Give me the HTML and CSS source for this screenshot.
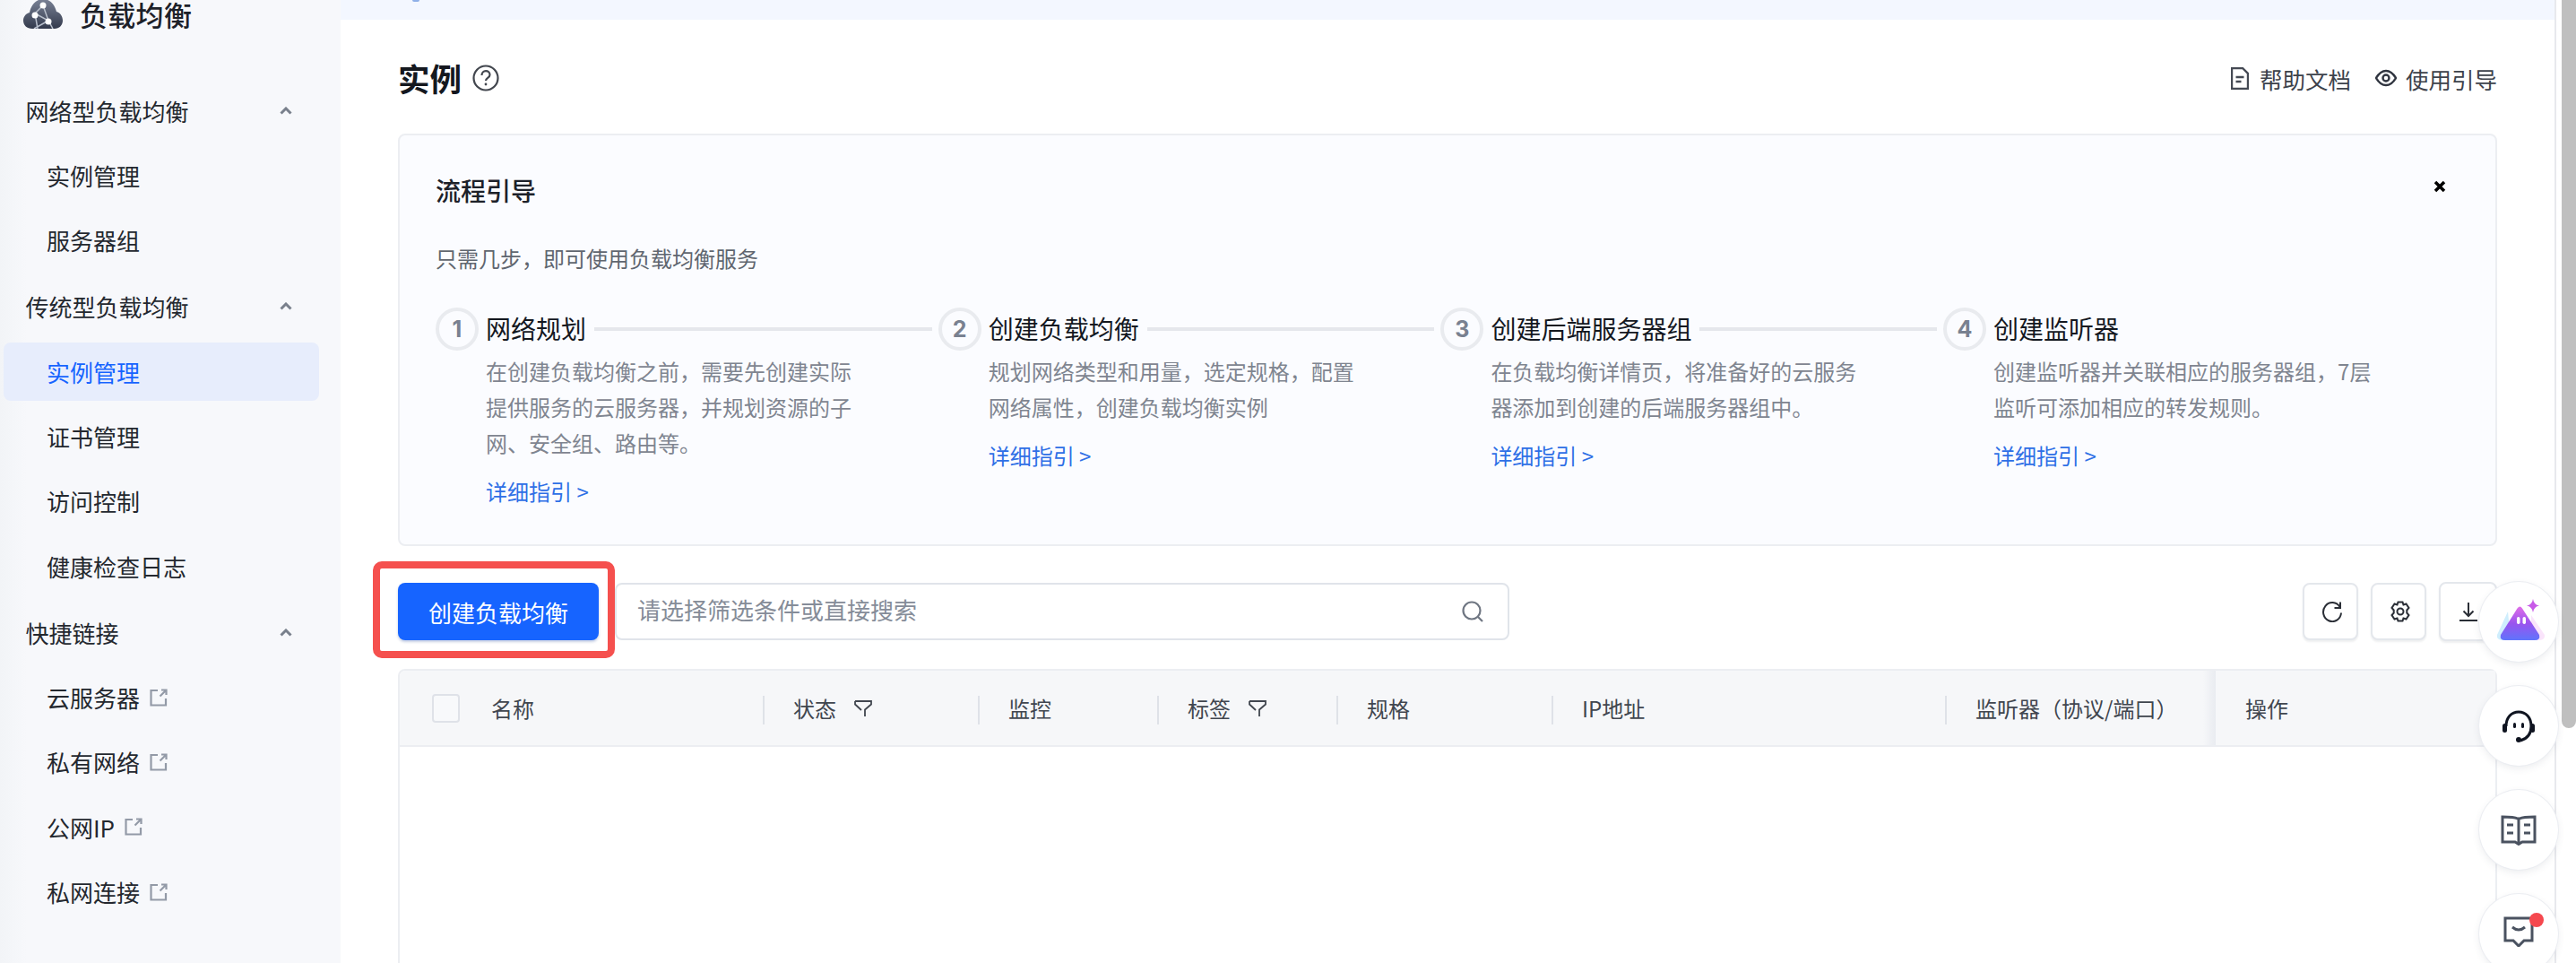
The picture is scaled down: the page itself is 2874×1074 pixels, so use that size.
FILE: index.html
```html
<!DOCTYPE html>
<html lang="zh-CN">
<head>
<meta charset="utf-8">
<title>负载均衡</title>
<link rel="stylesheet" href="styles.css">
</head>
<body>
<div class="app">
  <aside class="side">
    <div class="brand">
      <svg class="brand-logo" viewBox="0 0 44 32">
        <defs><linearGradient id="cl" x1="0" y1="0" x2="0" y2="1"><stop offset="0" stop-color="#7a8296"/><stop offset="1" stop-color="#333a4c"/></linearGradient></defs>
        <path d="M10 32C4 32 0 28 0 23c0-4.500 3-8 7-9C8.500 6 14-1 22-1s13 6 15 14c4 1 7 5 7 10 0 5-4 9-9 9z" fill="url(#cl)"/>
        <path d="M22 6l-9 9 15 8 5 9M13 15l3 17M22 6l6 17M28 23l-16 9" stroke="#b9c0cc" stroke-width="1.500" fill="none"/>
        <circle cx="22" cy="6" r="3.500" fill="#fff"/><circle cx="13" cy="17" r="3.500" fill="#fff"/><circle cx="28" cy="24" r="3.500" fill="#fff"/>
      </svg>
      <span class="brand-name">负载均衡</span>
    </div>
    <nav class="nav">
      <div class="nav-head"><span>网络型负载均衡</span><svg class="chev" viewBox="0 0 14 9"><path d="M1.500 7.500L7 2l5.500 5.500" /></svg></div>
      <a class="nav-item">实例管理</a>
      <a class="nav-item">服务器组</a>
      <div class="nav-head group"><span>传统型负载均衡</span><svg class="chev" viewBox="0 0 14 9"><path d="M1.500 7.500L7 2l5.500 5.500" /></svg></div>
      <a class="nav-item active">实例管理</a>
      <a class="nav-item">证书管理</a>
      <a class="nav-item">访问控制</a>
      <a class="nav-item">健康检查日志</a>
      <div class="nav-head group"><span>快捷链接</span><svg class="chev" viewBox="0 0 14 9"><path d="M1.500 7.500L7 2l5.500 5.500" /></svg></div>
      <a class="nav-item">云服务器<svg class="ext" viewBox="0 0 20 20"><path d="M9 2H1.500v16.500H18V11M11.500 8.500L18.500 1.500M13 1.500h5.500V7"/></svg></a>
      <a class="nav-item">私有网络<svg class="ext" viewBox="0 0 20 20"><path d="M9 2H1.500v16.500H18V11M11.500 8.500L18.500 1.500M13 1.500h5.500V7"/></svg></a>
      <a class="nav-item">公网IP<svg class="ext" viewBox="0 0 20 20"><path d="M9 2H1.500v16.500H18V11M11.500 8.500L18.500 1.500M13 1.500h5.500V7"/></svg></a>
      <a class="nav-item">私网连接<svg class="ext" viewBox="0 0 20 20"><path d="M9 2H1.500v16.500H18V11M11.500 8.500L18.500 1.500M13 1.500h5.500V7"/></svg></a>
    </nav>
  </aside>

  <main class="main">
    <div class="banner"><i class="banner-dot"></i></div>
    <div class="content">
      <header class="page-head">
        <h1 class="page-title">实例</h1>
        <svg class="help" viewBox="0 0 30 30"><circle cx="15" cy="15" r="13.500"/><path d="M10.500 12c0-3 2-4.800 4.500-4.800s4.500 1.700 4.500 4.200c0 3.300-4.500 3.600-4.500 6.600"/><circle class="help-dot" cx="15" cy="22" r="1.400"/></svg>
        <div class="head-links">
          <a class="head-link"><svg class="doc" viewBox="0 0 20 25"><path d="M1 1h12l6 6v17H1zM5.500 11h9M5.500 16h6"/></svg>帮助文档</a>
          <a class="head-link"><svg class="eye" viewBox="0 0 24 20"><path d="M1 10c3-5 7-8 11-8s8 3 11 8c-3 5-7 8-11 8S4 15 1 10z"/><circle cx="12" cy="10" r="3.500"/></svg>使用引导</a>
        </div>
      </header>

      <section class="guide">
        <div class="guide-top">
          <h2 class="guide-title">流程引导</h2>
          <svg class="close" viewBox="0 0 14 14"><path d="M2 2l10 10M12 2L2 12"/></svg>
        </div>
        <p class="guide-sub">只需几步，即可使用负载均衡服务</p>
        <ol class="steps">
          <li class="step">
            <span class="step-no">1</span>
            <div class="step-body">
              <div class="step-head"><span class="step-title">网络规划</span><i class="step-line"></i></div>
              <p class="step-desc">在创建负载均衡之前，需要先创建实际<br>提供服务的云服务器，并规划资源的子<br>网、安全组、路由等。</p>
              <a class="step-link">详细指引 &gt;</a>
            </div>
          </li>
          <li class="step">
            <span class="step-no">2</span>
            <div class="step-body">
              <div class="step-head"><span class="step-title">创建负载均衡</span><i class="step-line"></i></div>
              <p class="step-desc">规划网络类型和用量，选定规格，配置<br>网络属性，创建负载均衡实例</p>
              <a class="step-link">详细指引 &gt;</a>
            </div>
          </li>
          <li class="step">
            <span class="step-no">3</span>
            <div class="step-body">
              <div class="step-head"><span class="step-title">创建后端服务器组</span><i class="step-line"></i></div>
              <p class="step-desc">在负载均衡详情页，将准备好的云服务<br>器添加到创建的后端服务器组中。</p>
              <a class="step-link">详细指引 &gt;</a>
            </div>
          </li>
          <li class="step">
            <span class="step-no">4</span>
            <div class="step-body">
              <div class="step-head"><span class="step-title">创建监听器</span></div>
              <p class="step-desc">创建监听器并关联相应的服务器组，7层<br>监听可添加相应的转发规则。</p>
              <a class="step-link">详细指引 &gt;</a>
            </div>
          </li>
        </ol>
      </section>

      <div class="toolbar">
        <button class="btn-primary">创建负载均衡</button>
        <div class="search">
          <span class="placeholder">请选择筛选条件或直接搜索</span>
          <svg class="search-icon" viewBox="0 0 24 24"><circle cx="11" cy="11" r="9.500"/><path d="M18 18l5 5"/></svg>
        </div>
        <div class="tools">
          <button class="tool"><svg viewBox="0 0 24 24"><path d="M20.500 7A10 10.500 0 1 0 22 13.500"/><path d="M21 1.500V8h-6.500"/></svg></button>
          <button class="tool"><svg viewBox="0 0 24 24"><path d="M9.500 1.500h5l1 3 3-1 3 4.500-2.200 2.500v3l2.200 2.500-3 4.500-3-1-1 3h-5l-1-3-3 1-3-4.500 2.200-2.500v-3L2.500 8l3-4.500 3 1z"/><circle cx="12" cy="12" r="3.500"/></svg></button>
          <button class="tool tool-last"><svg viewBox="0 0 24 24"><path d="M12 2v15M6.500 11.500L12 17l5.500-5.500M2 22h20"/></svg></button>
        </div>
      </div>

      <section class="table">
        <div class="thead">
          <div class="th th-name"><i class="check"></i>名称</div>
          <div class="th sep">状态<svg class="filter" viewBox="0 0 20 20"><path d="M1 2h18v3.500l-7 6V19M1 2v3.500l7 6.500"/></svg></div>
          <div class="th sep">监控</div>
          <div class="th sep">标签<svg class="filter" viewBox="0 0 20 20"><path d="M1 2h18v3.500l-7 6V19M1 2v3.500l7 6.500"/></svg></div>
          <div class="th sep">规格</div>
          <div class="th sep">IP地址</div>
          <div class="th sep">监听器（协议/端口）</div>
          <div class="th th-sticky">操作</div>
        </div>
      </section>
    </div>
  </main>

  <div class="scrollbar"><div class="thumb"></div></div>
</div>

<div class="float-dock">
  <button class="fab"><svg class="fab-ai" viewBox="0 0 54 46">
    <defs><linearGradient id="ai" x1="0" y1="0" x2="0" y2="1"><stop offset="0" stop-color="#e06ee8"/><stop offset=".5" stop-color="#9a54ee"/><stop offset="1" stop-color="#5f74fc"/></linearGradient></defs>
    <path d="M12 14L0 40q-1 5 5 6h10z" fill="#cfeefd"/><path d="M38 18l15 22q1 5-5 6H38z" fill="#fae4fb"/>
    <path d="M22.500 10.500q3-4 5.500 0L47 40q1.500 6-5 6H9q-6.500 0-5-6z" fill="url(#ai)"/>
    <rect x="22" y="20" width="3.500" height="8" rx="1.700" fill="#fff"/><rect x="28.500" y="20" width="3.500" height="8" rx="1.700" fill="#fff"/>
    <path d="M40 0q1 6.500 7 7.500-6 1-7 7.500-1-6.500-7-7.500 6-1 7-7.500z" fill="#c85ae8"/>
  </svg></button>
  <button class="fab"><svg class="fab-head" viewBox="0 0 36 36">
    <path d="M4 18C4 8 10 2 18 2s14 6 14 16c0 9-5 14-12 16" fill="none" stroke="#0f1420" stroke-width="3"/>
    <rect x="0" y="15" width="5" height="10" rx="2.500" fill="#0f1420"/><rect x="31" y="15" width="5" height="10" rx="2.500" fill="#0f1420"/>
    <circle cx="18" cy="33" r="3" fill="#0f1420"/>
    <rect x="12" y="14" width="3" height="6" rx="1.500" fill="#0f1420"/><rect x="21" y="14" width="3" height="6" rx="1.500" fill="#0f1420"/>
  </svg></button>
  <button class="fab"><svg class="fab-book" viewBox="0 0 40 34">
    <path d="M19 4C15 2 8 2 2 2v28h14l4 2.500 4-2.500h14V2c-6 0-13 0-17 2zM20 4v28" fill="none" stroke="#4a5260" stroke-width="3"/>
    <path d="M7 11h7M7 20h7M26 11h7M26 20h7" stroke="#4a5260" stroke-width="3"/>
  </svg></button>
  <button class="fab fab-msg"><svg class="fab-chat" viewBox="0 0 34 34">
    <path d="M2 2h30v25h-9l-6 6-6-6H2z" fill="none" stroke="#4a5260" stroke-width="3"/>
    <path d="M10 12q7 6 14 0" fill="none" stroke="#4a5260" stroke-width="3"/>
  </svg><i class="badge"></i></button>
</div>
</body>
</html>
```

FILE: styles.css
```css
* { box-sizing: border-box; }
html, body { margin: 0; height: 100%; overflow: hidden; }
body {
  font-family: "Noto Sans CJK SC", "Inter", "Noto Sans", sans-serif;
  color: #1d2129;
  background: #fff;
}
h1, h2, p, ol { margin: 0; padding: 0; }
ol { list-style: none; }
i { display: block; }
button { font: inherit; border: 0; padding: 0; background: none; }

.app { display: flex; height: 1074px; }

/* sidebar */
.side {
  width: 380px;
  flex: none;
  background: linear-gradient(90deg, #f2f4f7 0, #f7f8fb 30px);
}
.brand { display: flex; height: 32px; padding-left: 26px; }
.brand-logo { width: 44px; height: 32px; flex: none; }
.brand-name { margin-left: 19px; font-size: 31px; line-height: 31px; height: 31px; font-weight: 500; color: #1d2129; letter-spacing: .3px; }
.nav { display: flex; flex-direction: column; padding: 58.500px 24px 0 4px; }
.nav-head, .nav-item {
  display: flex;
  align-items: center;
  flex: none;
  height: 65px;
  margin-bottom: 7.300px;
  font-size: 26px;
  color: #24282f;
  width: 352px;
  border-radius: 8px;
}
.nav-head { padding-left: 24.500px; justify-content: flex-start; }
.nav-head span { flex: 1; }
.nav-head.group { margin-top: 2px; }
.nav-item { padding-left: 48px; }
.nav-item.active { background: #e7edfc; color: #1664ff; }
.chev { width: 14px; height: 9px; margin-right: 30px; fill: none; stroke: #79808c; stroke-width: 3; }
.ext { width: 20px; height: 20px; margin-left: 11px; fill: none; stroke: #939aa7; stroke-width: 2.200; }

/* main */
.main { width: 2470px; flex: none; display: flex; flex-direction: column; }
.banner { height: 22px; background: #f3f7ff; flex: none; padding-left: 80px; }
.banner-dot { width: 8px; height: 2px; border-radius: 0 0 4px 4px; background: #8fb0e8; }
.content { flex: 1; min-height: 0; padding: 0 64px; display: flex; flex-direction: column; }

.page-head { display: flex; align-items: center; height: 127px; padding-top: 3px; flex: none; }
.page-title { font-size: 35.500px; line-height: 44px; font-weight: 700; color: #14181f; }
.help { width: 30px; height: 30px; margin-left: 12px; fill: none; stroke: #42464e; stroke-width: 2.200; }
.help-dot { fill: #42464e; stroke: none; }
.head-links { margin-left: auto; display: flex; align-items: center; gap: 27px; }
.head-link { display: flex; align-items: center; font-size: 25.500px; color: #3d424b; }
.doc { width: 20px; height: 25px; margin-right: 12px; fill: none; stroke: #454a54; stroke-width: 2.400; }
.eye { width: 24px; height: 20px; margin-right: 10px; fill: none; stroke: #303540; stroke-width: 2.400; }

/* guide panel */
.guide {
  height: 460px;
  flex: none;
  border: 2px solid #eceef2;
  border-radius: 8px;
  background: #fbfcff;
  padding: 0 40px;
}
.guide-top { display: flex; align-items: center; justify-content: space-between; height: 120px; padding-top: 1px; }
.guide-title { font-size: 28px; font-weight: 500; color: #1d2129; }
.close { width: 14px; height: 14px; margin: -7px 15px 0 0; fill: none; stroke: #000; stroke-width: 3.500; }
.guide-sub { font-size: 24px; line-height: 34px; color: #60666f; margin-bottom: 38px; }

.steps { display: grid; grid-template-columns: repeat(4, 560.700px); }
.step { display: flex; }
.step-no {
  width: 48px; height: 48px; flex: none;
  border: 4px solid #e9ebef; border-radius: 50%;
  display: flex; align-items: center; justify-content: center;
  font-size: 25px; font-weight: 700; color: #798190;
  font-family: "Inter", sans-serif;
}
.step-body { flex: 1; min-width: 0; margin-left: 8px; }
.step-head { display: flex; align-items: center; height: 48px; margin-top: -1px; }
.step-title { font-size: 28px; color: #14181f; white-space: nowrap; }
.step-line { flex: 1; height: 4px; background: #e5e7ec; margin: 2px 7px 0 9px; }
.step-desc { font-size: 24px; line-height: 40px; color: #7f8590; margin-top: 4px; }
.step-link { display: block; margin-top: 14px; font-size: 24px; line-height: 40px; color: #2e6fe6; }

/* toolbar */
.toolbar { display: flex; align-items: center; height: 64px; margin-top: 41px; flex: none; }
.btn-primary {
  position: relative;
  width: 224px; height: 64px; flex: none;
  background: #1664ff; color: #fff; border-radius: 8px;
  font-size: 26px;
  box-shadow: 0 2px 3px rgba(22, 60, 140, .25);
}
.btn-primary::after {
  content: "";
  position: absolute;
  left: -28px; right: -18px; top: -24px; bottom: -20px;
  border: 8px solid #f5504e;
  border-radius: 10px;
}
.search {
  width: 998px; height: 64px; margin-left: 18px;
  border: 2px solid #e0e4ea; border-radius: 8px;
  display: flex; align-items: center; justify-content: space-between;
  padding: 0 27px 0 23px; background: #fff;
}
.placeholder { font-size: 26px; line-height: 36px; margin-top: -4px; color: #858c98; }
.search-icon { width: 24px; height: 24px; fill: none; stroke: #6f7682; stroke-width: 2.200; }
.tools { margin-left: auto; display: flex; gap: 14px; }
.tool {
  width: 62px; height: 64px;
  border: 2px solid #e4e7ec; border-radius: 8px; background: #fff;
  display: flex; align-items: center; justify-content: center;
  box-shadow: 0 2px 2px rgba(40, 50, 70, .08);
  padding-left: 3px;
}
.tool svg { width: 24px; height: 24px; fill: none; stroke: #2a2e36; stroke-width: 2; }
.tool-last { width: 65px; height: 66px; margin-top: -1px; padding-left: 0; }

/* table */
.table {
  flex: 1; min-height: 0; margin-top: 32px;
  border: 2px solid #eceef2; border-bottom: 0; border-radius: 8px 8px 0 0;
}
.thead {
  display: grid;
  grid-template-columns: 405px 240px 200px 200px 240px 439px 302px 312px;
  height: 85px;
  background: #f6f7f9;
  border-bottom: 2px solid #eceef2;
  border-radius: 6px 6px 0 0;
}
.th { position: relative; display: flex; align-items: center; font-size: 24px; color: #41464f; padding-left: 34px; white-space: nowrap; }
.sep::before {
  content: ""; position: absolute; left: 0; top: 28px; height: 32px; width: 2px; background: #dfe2e8;
}
.th-name { padding-left: 36px; }
.check { width: 31px; height: 32px; border: 2px solid #dfe2e8; border-radius: 4px; background: #f8f9fb; margin-right: 35px; }
.filter { width: 20px; height: 20px; margin-left: 20px; fill: none; stroke: #41464f; stroke-width: 1.800; }
.th-sticky { background: #f6f7f9; padding-left: 33px; }
.th-sticky::before {
  content: ""; position: absolute; left: -14px; top: 0; bottom: 0; width: 14px;
  background: linear-gradient(90deg, rgba(220, 224, 232, 0), rgba(220, 224, 232, .5));
}

/* scrollbar */
.scrollbar { width: 24px; flex: none; border-left: 2px solid #e8e9ed; padding-left: 6px; background: #fff; }
.thumb { width: 16px; height: 812px; background: #bfbfbf; border-radius: 0 0 8px 8px; }

/* floating dock (over the page) */
.float-dock {
  position: fixed;
  left: 2766px; top: 649px;
  display: flex; flex-direction: column; gap: 27px;
}
.fab {
  position: relative;
  width: 88px; height: 89px;
  border-radius: 50%;
  background: #fff;
  display: flex; align-items: center; justify-content: center;
  box-shadow: 0 0 0 1px #eceef2, 0 3px 8px rgba(60, 70, 90, .10);
}
.fab-ai { width: 54px; height: 46px; margin-top: -6px; margin-left: 6px; }
.fab-head { width: 36px; height: 36px; }
.fab-book { width: 40px; height: 34px; }
.fab-chat { width: 34px; height: 34px; margin-top: -6px; }
.badge { position: absolute; left: 56px; top: 21px; width: 16px; height: 16px; border-radius: 50%; background: #f5484e; }
```
